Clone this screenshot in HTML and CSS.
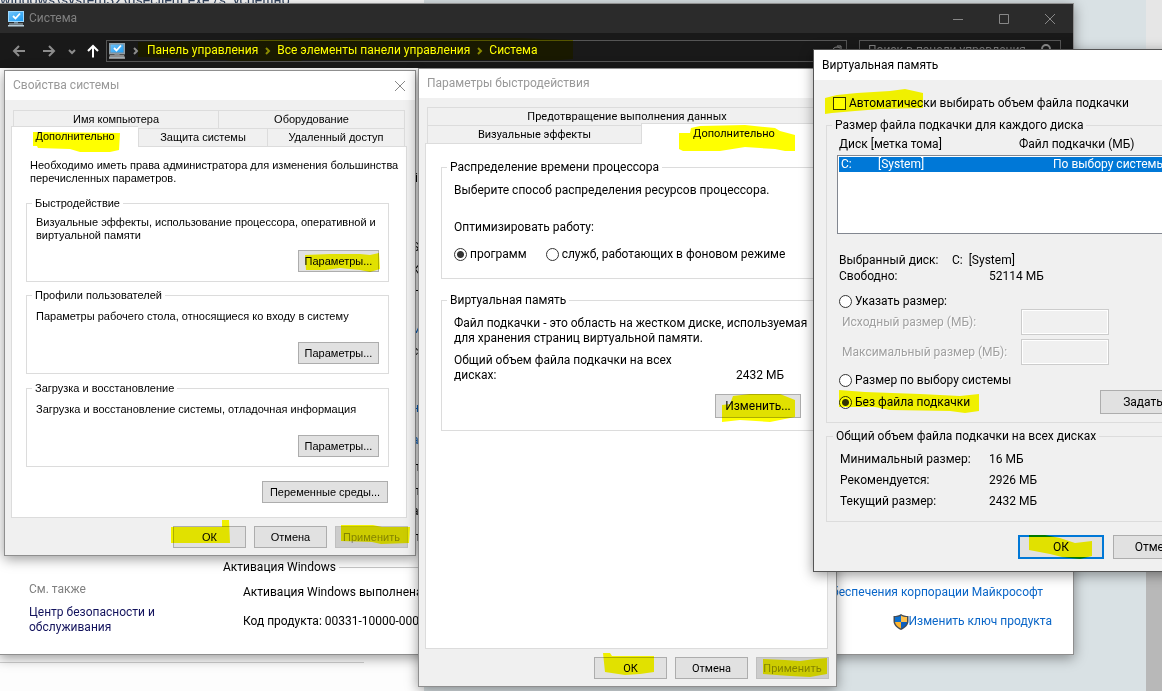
FILE: index.html
```
<!DOCTYPE html>
<html lang="ru">
<head>
<meta charset="utf-8">
<title>Система</title>
<link rel="stylesheet" href="styles.css">
</head>
<body>
<svg class="defs" aria-hidden="true">
  <linearGradient id="screen" x1="0" y1="0" x2="1" y2="1"><stop offset="0" stop-color="#6fc4fb"/><stop offset="1" stop-color="#1e9af0"/></linearGradient>
  <symbol id="pc" viewBox="0 0 16 16">
    <rect x="0" y="0" width="16" height="11" fill="#9fd9ff"/>
    <rect x="1" y="1" width="14" height="9" fill="url(#screen)"/>
    <path d="M5 5l2.5 2.500L12 2.500" fill="none" stroke="#fff" stroke-width="1.800"/>
    <path d="M6 11h4v1.500H6z" fill="#6f8796"/>
    <path d="M1 12.500h14v1H1zM0 14h16v1.500H0z" fill="#b8cdd9"/>
  </symbol>
</svg>
<main class="desktop">
  <div class="page-behind">
    <p>windows\system32\useclient.exe /s &nbsp;успешно</p>
    <hr>
  </div>
  <div class="scrollbar"></div>

  <section class="window system">
    <header class="dark-title">
      <svg class="pc"><use href="#pc"/></svg>
      <h1>Система</h1>
      <div class="caption-buttons">
        <button aria-label="Свернуть"><svg viewBox="0 0 12 12"><path d="M1 6.500h10"/></svg></button>
        <button aria-label="Развернуть"><svg viewBox="0 0 12 12"><path d="M1.500 1.500h9v9h-9z"/></svg></button>
        <button aria-label="Закрыть"><svg viewBox="0 0 12 12"><path d="M1 1l10 10M11 1L1 11"/></svg></button>
      </div>
    </header>
    <nav class="nav">
      <button class="arrow" aria-label="Назад"><svg viewBox="0 0 14 14"><path d="M13 7H2M7 2L2 7l5 5"/></svg></button>
      <button class="arrow" aria-label="Вперед"><svg viewBox="0 0 14 14"><path d="M1 7h11M7 2l5 5-5 5"/></svg></button>
      <button class="recent" aria-label="Последние"><svg viewBox="0 0 8 8"><path d="M1 3l3 3 3-3"/></svg></button>
      <button class="up" aria-label="Вверх"><svg viewBox="0 0 14 14"><path d="M7 13.500V2M2 7l5-5 5 5"/></svg></button>
      <div class="address">
        <svg class="pc"><use href="#pc"/></svg>
        <svg class="chev first-chev" viewBox="0 0 8 8"><path d="M2 1l3 3-3 3"/></svg>
        <a href="#">Панель управления</a>
        <svg class="chev" viewBox="0 0 8 8"><path d="M2 1l3 3-3 3"/></svg>
        <a href="#">Все элементы панели управления</a>
        <svg class="chev" viewBox="0 0 8 8"><path d="M2 1l3 3-3 3"/></svg>
        <a href="#">Система</a>
        <svg class="refresh" viewBox="0 0 14 14"><path d="M10 4a5 5 0 1 0 2 4M7 2h4v4"/></svg>
      </div>
      <div class="search">
        <input type="text" aria-label="Поиск" placeholder="Поиск в панели управления">
        <svg viewBox="0 0 14 14"><circle cx="8" cy="5" r="4"/><path d="M5 8l-4 5"/></svg>
      </div>
    </nav>
    <div class="system-body">
      <ul class="details">
        <li>li</li><li>S</li><li>K(</li><li>Н</li><li class="blue">м</li><li>с</li>
        <li class="blue">н</li><li class="blue">ар</li><li>-т</li><li>-т</li><li>а</li><li>-т</li>
      </ul>
      <div class="bottom">
        <aside>
          <h2>См. также</h2>
          <a href="#">Центр безопасности и обслуживания</a>
        </aside>
        <div class="activation">
          <h2>Активация Windows</h2>
          <p><span>Активация Windows выполнена</span><a href="#">обеспечения корпорации Майкрософт</a></p>
          <p class="key"><span>Код продукта: 00331-10000-00001</span>
            <a href="#"><svg viewBox="0 0 16 16"><path d="M8 0c2 1.500 4.500 2 7.500 2v5c0 4-3 7-7.500 9C3.500 14 .5 11 .5 7V2C3.500 2 6 1.500 8 0z" fill="#444c55"/><path d="M8 1.500V8H2V3c2.500 0 4.500-.5 6-1.500z" fill="#0c6fd0"/><path d="M8 1.500V8h6V3c-2.500 0-4.500-.5-6-1.500z" fill="#ffc04a"/><path d="M8 8v6.500C4.500 13 2.500 11 2 8z" fill="#ffb52e"/><path d="M8 8v6.500c3.500-1.500 5.500-3.500 6-6.500z" fill="#0c5fc0"/></svg>Изменить ключ продукта</a></p>
        </div>
      </div>
    </div>
  </section>

  <section class="window props">
    <header class="title"><h1>Свойства системы</h1>
      <button aria-label="Закрыть"><svg viewBox="0 0 12 12"><path d="M1 1l10 10M11 1L1 11"/></svg></button>
    </header>
    <div class="tabs">
      <div class="tab-row"><button class="w-name">Имя компьютера</button><button class="grow">Оборудование</button></div>
      <div class="tab-row second"><button class="active w-adv">Дополнительно</button><button class="w-prot">Защита системы</button><button class="grow">Удаленный доступ</button></div>
    </div>
    <div class="panel">
      <p class="intro">Необходимо иметь права администратора для изменения большинства перечисленных параметров.</p>
      <fieldset class="first"><legend>Быстродействие</legend>
        <p>Визуальные эффекты, использование процессора, оперативной и виртуальной памяти</p>
        <button class="btn">Параметры...</button>
      </fieldset>
      <fieldset><legend>Профили пользователей</legend>
        <p>Параметры рабочего стола, относящиеся ко входу в систему</p>
        <button class="btn">Параметры...</button>
      </fieldset>
      <fieldset><legend>Загрузка и восстановление</legend>
        <p>Загрузка и восстановление системы, отладочная информация</p>
        <button class="btn">Параметры...</button>
      </fieldset>
      <button class="btn env">Переменные среды...</button>
    </div>
    <footer><button class="btn">ОК</button><button class="btn">Отмена</button><button class="btn" disabled>Применить</button></footer>
  </section>

  <section class="window perf">
    <header class="title"><h1>Параметры быстродействия</h1></header>
    <div class="tabs">
      <div class="tab-row"><button class="grow">Предотвращение выполнения данных</button></div>
      <div class="tab-row second"><button class="w-vis">Визуальные эффекты</button><button class="active grow">Дополнительно</button></div>
    </div>
    <div class="panel">
      <fieldset class="cpu"><legend>Распределение времени процессора</legend>
        <p>Выберите способ распределения ресурсов процессора.</p>
        <p class="optimize">Оптимизировать работу:</p>
        <div class="radios">
          <label><input type="radio" name="opt" checked>программ</label>
          <label><input type="radio" name="opt">служб, работающих в фоновом режиме</label>
        </div>
      </fieldset>
      <fieldset class="vmem"><legend>Виртуальная память</legend>
        <p class="about">Файл подкачки - это область на жестком диске, используемая<br>для хранения страниц виртуальной памяти.</p>
        <div class="total"><p>Общий объем файла подкачки на всех дисках:</p><span>2432 МБ</span></div>
        <button class="btn tall">Изменить...</button>
      </fieldset>
    </div>
    <footer><button class="btn">ОК</button><button class="btn">Отмена</button><button class="btn" disabled>Применить</button></footer>
  </section>

  <section class="window vm">
    <header class="title"><h1>Виртуальная память</h1></header>
    <div class="vm-body">
      <label class="auto"><input type="checkbox">Автоматически выбирать объем файла подкачки</label>
      <fieldset class="sizes"><legend>Размер файла подкачки для каждого диска</legend>
        <div class="list-head"><span>Диск [метка тома]</span><span>Файл подкачки (МБ)</span></div>
        <ul class="list"><li><span>C:</span><span>[System]</span><span>По выбору системы</span></li></ul>
        <dl class="drive">
          <dt>Выбранный диск:</dt><dd>C: &nbsp;[System]</dd>
          <dt>Свободно:</dt><dd class="free">52114 МБ</dd>
        </dl>
        <label><input type="radio" name="size">Указать размер:</label>
        <div class="field"><label for="min">Исходный размер (МБ):</label><input id="min" type="text" disabled></div>
        <div class="field"><label for="max">Максимальный размер (МБ):</label><input id="max" type="text" disabled></div>
        <label class="by-system"><input type="radio" name="size">Размер по выбору системы</label>
        <div class="set"><label><input type="radio" name="size" checked>Без файла подкачки</label><button class="btn tall">Задать</button></div>
      </fieldset>
      <fieldset class="totals"><legend>Общий объем файла подкачки на всех дисках</legend>
        <dl>
          <dt>Минимальный размер:</dt><dd>16 МБ</dd>
          <dt>Рекомендуется:</dt><dd>2926 МБ</dd>
          <dt>Текущий размер:</dt><dd>2432 МБ</dd>
        </dl>
      </fieldset>
      <div class="vm-actions"><button class="btn tall default">ОК</button><button class="btn tall">Отмена</button></div>
    </div>
  </section>

  <svg class="marker" viewBox="0 0 1162 691" aria-hidden="true">
    <path d="M138 42L240 40 350 38H520L573 40V59L560 60 530 61 500 60H303L300 61H232L225 60 138 57z"/>
    <path d="M33 132L120 133 119 150 110 152H80L70 149 38 148 37 146H33z"/>
    <path d="M679 133H690L691 128 700 126 745 125 775 128 780 131 795 135V151H785L775 149 745 147 720 151H683L679 149z"/>
    <path d="M825 98L837 95 857 93 890 91 905 89 923 93V108L880 109 855 111 832 113 825 114z"/>
    <path d="M305 255L330 254H360L370 255 379 253 380 269 370 272 360 270 340 268 325 270H306z"/>
    <path d="M171 527H222V520H229L230 543H171z"/>
    <path d="M341 525H373L382 527H410L409 543 381 544 372 542 341 541z"/>
    <path d="M722 405L730 404 733 396 750 394H780L795 400V417L780 420 770 422 740 420 722 422z"/>
    <path d="M603 653H610L612 656H654V672L640 674 625 675 605 672z"/>
    <path d="M763 659L785 660 800 661 815 659 827 658V674L810 677 790 676 763 674z"/>
    <path d="M839 390L865 392 920 394 960 396 979 394V411L965 413 950 411 890 410 875 407H839z"/>
    <path d="M1029 535L1045 535 1060 538 1075 543 1092 541V556L1080 559 1062 557 1050 554 1029 550z"/>
  </svg>
</main>
</body>
</html>
```
FILE: styles.css
```
* { box-sizing: border-box; }
body { margin: 0; font: 12px/15px Roboto, "Noto Sans", sans-serif; color: #000; }
h1, h2, p, ul, dl, dd, fieldset, legend { margin: 0; padding: 0; font-size: inherit; font-weight: 400; }
ul { list-style: none; }
button, input { font: inherit; color: inherit; margin: 0; }
button { padding: 0; background: none; border: 0; }
a { color: #0a66c8; text-decoration: none; }
.defs { position: absolute; width: 0; height: 0; }

.desktop { position: relative; min-height: 100vh; overflow: hidden; background: linear-gradient(90deg, #fdfdfd 424px, #d9e1e4 424px); }
.page-behind { width: 364px; height: 663px; display: flex; flex-direction: column; justify-content: space-between; }
.page-behind p { font-size: 14px; line-height: 16px; margin-top: -8px; color: #31435e; white-space: nowrap; }
.page-behind hr { width: 100%; margin: 0; border: 0; border-top: 1px solid #d0d0d0; }
.scrollbar { position: absolute; top: 0; right: 0; bottom: 0; width: 16px; background: linear-gradient(#e6e6e6 300px, #b8b8b8 300px); }

.window { position: absolute; isolation: isolate; display: flex; flex-direction: column; background: #f0f0f0; border: 1px solid #8f8f8f; box-shadow: 0 3px 12px rgba(0,0,0,.4); }
.title { display: flex; align-items: center; justify-content: space-between; height: 29px; padding: 0 9px 0 8px; background: #fff; color: #999; }
.title svg, .caption-buttons svg { display: block; width: 12px; height: 12px; fill: none; stroke: #888; }

/* System window */
.system { left: -1px; top: 3px; width: 1075px; background: #fff; }
.dark-title { display: flex; align-items: center; height: 29px; padding: 0 17px 0 8px; background: #2b2b2b; color: #808080; }
.pc { width: 16px; height: 16px; flex: none; }
.dark-title h1 { margin-left: 5px; flex: 1; }
.caption-buttons { display: flex; gap: 34px; }
.nav { display: flex; align-items: center; height: 35px; padding: 0 12px; background: #191919; }
.nav svg { display: block; fill: none; stroke: #8c8c8c; }
.arrow svg, .up svg { width: 14px; height: 14px; stroke-width: 2; }
.arrow { margin-right: 16px; }
.recent { margin-left: -4px; }
.recent svg { width: 8px; height: 8px; stroke-width: 2; }
.up { margin: 0 6px 0 10px; }
.up svg { stroke: #fff; }
.address, .search { display: flex; align-items: center; height: 22px; border: 1px solid #555; }
.address { flex: 1; padding: 0 2px; margin-right: 12px; }
.address a { color: #fff; }
.chev { width: 8px; height: 8px; margin: 0 5px 0 6px; stroke-width: 2; }
.first-chev { margin: 0 7px; }
.refresh { width: 14px; height: 14px; margin-left: auto; }
.search { width: 202px; padding: 0 8px; }
.search input { flex: 1; min-width: 0; padding: 0; border: 0; background: none; }
.search input::placeholder { color: #808080; opacity: 1; }
.search svg { width: 14px; height: 14px; stroke-width: 2; }
.details { display: grid; grid-template-rows: 69px 23px 21px 38px 22px 57px 32px 27px 24px 20px 26px 30px; padding: 103px 0 0 412px; }
.blue { color: #0a66c8; }
.bottom { display: flex; padding-bottom: 19px; }
.bottom aside { width: 223px; padding: 22px 60px 0 29px; }
.bottom aside h2 { color: #808080; margin-bottom: 8px; }
.bottom aside a { color: #12125c; }
.activation { flex: 1; }
.activation h2 { display: flex; align-items: center; gap: 3px; }
.activation h2::after { content: ""; flex: 1; height: 1px; background: #c8c8c8; }
.activation p { display: flex; justify-content: space-between; margin: 10px 30px 14px 20px; }
.activation .key { margin: 0 21px 0 20px; }
.key a { display: flex; }
.key svg { width: 16px; height: 16px; }

/* Shared dialog parts */
.tabs { position: relative; }
.tab-row { display: flex; }
.tab-row button { height: 18px; border: 1px solid #dcdcdc; border-width: 1px 0 0 1px; line-height: 17px; }
.tab-row button:last-child { border-right-width: 1px; }
.tab-row .grow { flex: 1; }
.tab-row .active { height: 21px; margin: -2px 0 -1px; padding-bottom: 2px; background: #fff; z-index: 1; }
.panel { background: #fff; border: 1px solid #dcdcdc; }
fieldset { min-width: 0; border: 1px solid #dcdcdc; }
legend { height: 15px; padding: 0 3px; }
.btn { height: 22px; width: 73px; background: #e1e1e1; border: 1px solid #adadad; white-space: nowrap; }
.btn:disabled { background: #ccc; border-color: #bfbfbf; color: #838383; }
.tall { width: 86px; height: 24px; }
.default { border: 2px solid #0078d7; }
.window footer { display: flex; justify-content: flex-end; gap: 8px; padding: 8px 7px 7px; }
input[type=radio], input[type=checkbox] { appearance: none; width: 13px; height: 13px; flex: none; border: 1px solid #333; background: #fff; }
input[type=radio] { border-radius: 50%; }
input[type=radio]:checked { background: radial-gradient(circle, #333 3px, #fff 4px); }
label { display: flex; align-items: center; gap: 3px; white-space: nowrap; }

/* System properties */
.props { left: 4px; top: 70px; width: 412px; font: 11px/13px "Liberation Sans", Arial, sans-serif; }
.props .title { font: 12px/15px Roboto, sans-serif; }
.props .tabs { margin: 10px 10px 0 8px; }
.props .second { margin-left: -2px; }
.w-name { width: 205px; }
.w-adv { width: 127px; }
.w-prot { width: 129px; }
.props .panel { margin: 0 8px 0 6px; padding: 12px 17px 14px 14px; display: flex; flex-direction: column; }
.intro { margin: 0 -10px 11px 4px; }
.props fieldset { display: flow-root; padding: 7px 9px 9px; margin-bottom: 7px; }
.props .first { padding-top: 5px; margin-bottom: 6px; }
.props legend { margin-left: -4px; line-height: 15px; }
.props fieldset .btn { display: block; width: 81px; margin: 19px 0 0 auto; }
.props .first .btn { margin-top: 8px; }
.props .env { width: 126px; margin: 7px 1px 0 auto; }

/* Performance options */
.perf { left: 418px; top: 68px; width: 419px; min-height: 619px; }
.perf .tabs { margin: 9px 9px 0 8px; }
.perf .tabs, .perf footer { font-size: 11px; }
.w-vis { width: 214px; }
.perf .panel { flex: 1; margin: 0 8px 0 6px; padding: 16px 11px 0 15px; }
.perf fieldset { padding: 8px 12px 12px; }
.perf legend { margin-left: -7px; }
.perf .cpu { padding-bottom: 16px; margin-bottom: 14px; }
.optimize { margin: 22px 0 12px; }
.radios { display: flex; gap: 19px; }
.about { white-space: nowrap; }
.total { display: flex; align-items: flex-end; justify-content: space-between; margin: 7px 19px 11px 0; }
.total p { width: 240px; }
.vmem .btn { display: block; margin: 0 2px 0 auto; }

/* Virtual memory */
.vm { left: 813px; top: 49px; width: 399px; border-color: #555; }
.vm .title { height: 30px; color: #000; }
.vm-body { padding: 16px 12px 12px; }
.auto { padding-left: 7px; margin-bottom: 7px; }
.vm fieldset { padding: 4px 10px 8px 12px; }
.vm legend { margin-left: -7px; }
.list-head { display: flex; margin-bottom: 3px; }
.list-head span:first-child { width: 180px; }
.list { height: 79px; margin-left: -2px; padding: 1px; background: #fff; border: 1px solid #828790; }
.list li { display: flex; padding-left: 2px; background: #0078d7; color: #fff; white-space: nowrap; }
.list span:nth-child(1) { width: 37px; }
.list span:nth-child(2) { width: 175px; }
.drive { display: grid; grid-template-columns: 113px 1fr; row-gap: 1px; margin: 19px 0 10px; }
.free { padding-left: 37px; }
.field { display: flex; justify-content: space-between; margin: 0 79px 4px 3px; color: #a0a0a0; text-shadow: 1px 1px #fff; }
.field input { width: 88px; height: 26px; background: #f0f0f0; border: 1px solid #ccc; box-shadow: inset 0 0 0 1px #fff; }
.by-system { margin-top: 8px; }
.set { display: flex; justify-content: space-between; align-items: center; margin: 2px 2px 0 0; }
.vm .totals { margin-top: 6px; padding: 5px 12px 9px 13px; }
.totals dl { display: grid; grid-template-columns: 149px 1fr; line-height: 21px; }
.vm-actions { display: flex; justify-content: flex-end; gap: 9px; margin-top: 13px; }

.marker { position: absolute; left: 0; top: 0; width: 1162px; height: 691px; fill: #ff0; mix-blend-mode: multiply; pointer-events: none; }
```
